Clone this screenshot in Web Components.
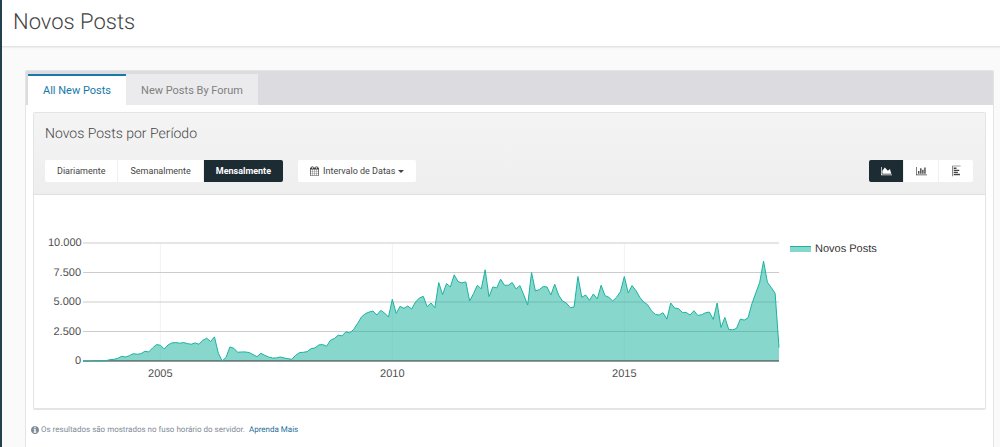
<!DOCTYPE html>
<html lang="pt">
<head>
<meta charset="utf-8">
<meta name="viewport" content="width=device-width, initial-scale=1">
<title>Novos Posts</title>
<style>
  html {
    height: 100%;
    background-color: #fafafa;
  }

  body {
    display: flex;
    flex-direction: column;
    min-height: 100%;
    margin: 0;
    box-sizing: border-box;
    border-left: 2px solid #23404f;
    font-family: Roboto, "Liberation Sans", sans-serif;
    font-size: 9px;
    color: #444;
    text-rendering: geometricPrecision;
  }
</style>
</head>
<body>
<page-header>Novos Posts</page-header>
<stats-tabs>
  <stats-panel>
    <span slot="title">Novos Posts por Período</span>
    <button-group slot="tools" labels="Diariamente,Semanalmente,Mensalmente" selected="2"></button-group>
    <date-range slot="tools">Intervalo de Datas</date-range>
    <chart-types slot="types"></chart-types>
    <area-chart series="Novos Posts"></area-chart>
  </stats-panel>
  <info-note slot="footer">Os resultados são mostrados no fuso horário do servidor. <a slot="link" href="#">Aprenda Mais</a></info-note>
</stats-tabs>

<script>
const define = (name, html, setup) => {
  const template = document.createElement('template');
  template.innerHTML = html;

  customElements.define(name, class extends HTMLElement {
    constructor() {
      super();
      this.attachShadow({ mode: 'open' }).appendChild(template.content.cloneNode(true));
    }

    connectedCallback() {
      if (setup && !this.ready) {
        this.ready = true;
        setup(this, this.shadowRoot);
      }
    }
  });
};

/* Shared by the button bars */
const buttonStyle = `
  button {
    display: flex;
    align-items: center;
    justify-content: center;
    height: 22px;
    margin: 0;
    padding: 0 12px;
    border: 0;
    font: inherit;
    color: #444;
    background-color: #fff;
    cursor: pointer;
  }

  button.selected {
    color: #fff;
    font-weight: 700;
    background-color: #1d2b33;
  }

  svg {
    display: block;
    fill: currentColor;
  }
`;

define('page-header', `
<style>
  :host {
    display: block;
    padding: 9px 11px 10px;
    background-color: #fff;
    border-bottom: 1px solid #e4e4e4;
    box-shadow: 0 1px 1px #eee;
  }

  h1 {
    margin: 0;
    font-size: 22px;
    font-weight: 300;
    line-height: 27px;
    color: #444;
  }
</style>
<h1><slot></slot></h1>
`);

define('stats-tabs', `
<style>
  :host {
    display: flex;
    flex: 1;
    flex-direction: column;
    margin: 23px 6px 0 23px;
    border: 1px solid #e4e4e6;
    border-bottom: 0;
    border-radius: 2px 2px 0 0;
    background-color: #fff;
  }

  .tabs {
    display: flex;
    padding: 3px 2px 0;
    background-color: #dcdce0;
  }

  button {
    height: 31px;
    margin: 0;
    padding: 0 15px;
    border: 0;
    border-top: 2px solid #ebebed;
    font: inherit;
    font-size: 11px;
    color: #808080;
    background-color: #ebebed;
    cursor: pointer;
  }

  button[aria-selected="true"] {
    border-top-color: #1878a8;
    color: #1878a8;
    background-color: #fff;
  }

  .content {
    padding: 7px 7px 14px;
  }

  .footer {
    padding: 0 5px 12px;
  }
</style>
<div class="tabs" role="tablist">
  <button role="tab" aria-selected="true">All New Posts</button>
  <button role="tab" aria-selected="false">New Posts By Forum</button>
</div>
<div class="content"><slot></slot></div>
<div class="footer"><slot name="footer"></slot></div>
`);

define('stats-panel', `
<style>
  :host {
    display: block;
    border: 1px solid #e4e4e4;
    border-bottom-width: 2px;
    border-radius: 2px;
  }

  header {
    padding: 11px 12px 12px 11px;
    border-bottom: 1px solid #e0e0e0;
    background: linear-gradient(#f4f4f4, #eee);
  }

  h2 {
    margin: 0 0 16px;
    font-size: 14px;
    font-weight: 300;
    line-height: 20px;
  }

  .tools {
    display: flex;
    gap: 15px;
  }

  .types {
    margin-left: auto;
  }
</style>
<header>
  <h2><slot name="title"></slot></h2>
  <div class="tools">
    <slot name="tools"></slot>
    <div class="types"><slot name="types"></slot></div>
  </div>
</header>
<slot></slot>
`);

define('button-group', `
<style>
  ${buttonStyle}

  :host {
    display: flex;
    gap: 1px;
  }

  button:first-of-type {
    border-radius: 2px 0 0 2px;
  }

  button:last-of-type {
    border-radius: 0 2px 2px 0;
  }
</style>
`, (host, root) => {
  host.getAttribute('labels').split(',').forEach((label, i) => {
    const button = document.createElement('button');
    button.textContent = label;
    button.classList.toggle('selected', i === Number(host.getAttribute('selected')));
    root.appendChild(button);
  });
});

define('date-range', `
<style>
  ${buttonStyle}

  :host {
    display: block;
  }

  button {
    gap: 4px;
    border-radius: 2px;
  }

  .caret {
    margin-left: -1px;
    border: 3px solid transparent;
    border-top-color: currentColor;
    border-bottom: 0;
  }
</style>
<button aria-haspopup="true">
  <svg width="9" height="10" viewBox="0 0 1664 1792"><path d="M128 1664h288v-288h-288v288zm352 0h320v-288h-320v288zm-352-352h288v-320h-288v320zm352 0h320v-320h-320v320zm-352-384h288v-288h-288v288zm736 736h320v-288h-320v288zm-384-736h320v-288h-320v288zm768 736h288v-288h-288v288zm-384-352h320v-320h-320v320zm-352-864v-288q0-13-9-22t-23-10h-64q-13 0-22 10t-10 22v288q0 13 10 23t22 9h64q13 0 23-9t9-23zm736 864h288v-320h-288v320zm-384-384h320v-288h-320v288zm384 0h288v-288h-288v288zm32-480v-288q0-13-9-22t-23-10h-64q-13 0-22 10t-10 22v288q0 13 10 23t22 9h64q13 0 23-9t9-23zm384-64v1280q0 52-38 90t-90 38h-1408q-52 0-90-38t-38-90v-1280q0-52 38-90t90-38h128v-96q0-66 47-113t113-47h64q66 0 113 47t47 113v96h384v-96q0-66 47-113t113-47h64q66 0 113 47t47 113v96h128q52 0 90 38t38 90z"/></svg>
  <slot></slot>
  <span class="caret"></span>
</button>
`);

define('chart-types', `
<style>
  ${buttonStyle}

  :host {
    display: flex;
    gap: 1px;
  }

  button {
    width: 34px;
    padding: 0;
  }

  button.selected {
    border-radius: 2px 0 0 2px;
  }

  button:last-child {
    border-radius: 0 2px 2px 0;
  }

  .rotated {
    transform: rotate(90deg);
  }
</style>
<button class="selected" aria-label="Area"><svg width="11" height="10" viewBox="0 0 2048 1792"><path d="M2048 1536v128h-2048v-1536h128v1408h1920zm-384-1024l256 896h-1664v-576l448-576 576 576z"/></svg></button>
<button aria-label="Column"><svg width="11" height="10" viewBox="0 0 2048 1792"><path d="M640 896v512h-256v-512h256zm384-512v1024h-256v-1024h256zm1024 1152v128h-2048v-1536h128v1408h1920zm-640-896v768h-256v-768h256zm384-384v1152h-256v-1152h256z"/></svg></button>
<button aria-label="Bar"><svg class="rotated" width="11" height="10" viewBox="0 0 2048 1792"><path d="M640 896v512h-256v-512h256zm384-512v1024h-256v-1024h256zm1024 1152v128h-2048v-1536h128v1408h1920zm-640-896v768h-256v-768h256zm384-384v1152h-256v-1152h256z"/></svg></button>
`);

// One level per month, May 2003 to May 2018. 352 levels = 10.000 posts.
const AXIS_LEVELS = 352;
const LEVELS = [
  0, 0, 0, 1, 1, 1, 1, 4,
  5, 8, 14, 12, 16, 22, 20, 22, 29, 27, 39, 49,
  47, 36, 48, 54, 55, 53, 55, 52, 50, 54, 50, 62,
  68, 58, 72, 23, 0, 11, 42, 38, 26, 27, 27, 25,
  19, 13, 23, 17, 12, 9, 9, 12, 9, 7, 5, 17,
  25, 26, 28, 37, 39, 48, 49, 44, 62, 67, 77, 75,
  87, 84, 94, 112, 131, 141, 146, 149, 137, 151, 143, 131,
  184, 142, 163, 157, 164, 155, 176, 188, 193, 162, 173, 159,
  234, 198, 231, 221, 257, 237, 233, 236, 179, 201, 226, 215,
  272, 192, 221, 218, 244, 226, 226, 234, 215, 225, 197, 167,
  264, 209, 213, 222, 221, 197, 229, 197, 179, 173, 159, 161,
  252, 190, 197, 181, 200, 185, 226, 195, 190, 179, 190, 207,
  252, 203, 225, 210, 190, 176, 168, 150, 139, 137, 144, 125,
  173, 158, 156, 145, 145, 137, 150, 136, 138, 144, 146, 124,
  173, 100, 130, 94, 93, 97, 125, 122, 129, 171, 203, 234,
  298, 235, 219, 202, 40
];

define('area-chart', `
<style>
  :host {
    display: grid;
    grid-template-columns: 33px 1fr 206px;
    padding: 40px 0 26px 14px;
    font-family: "Liberation Sans", Arial, sans-serif;
    font-size: 11px;
    line-height: 16px;
    color: #505050;
  }

  .values {
    display: flex;
    flex-direction: column;
    justify-content: space-between;
    height: 134px;
    text-align: right;
  }

  .plot {
    display: block;
    width: calc(100% - 2px);
    height: 118px;
    margin: 8px 0 8px 2px;
    overflow: visible;
  }

  .plot path {
    fill: none;
    vector-effect: non-scaling-stroke;
  }

  .plot .rows { stroke: #ccc; }
  .plot .years { stroke: #f2f2f2; }
  .plot .base { stroke: #333; }
  .plot .line { stroke: #1ab3a0; }
  .plot .area { fill: #10b09c; fill-opacity: .5; }

  .legend {
    display: flex;
    align-items: center;
    align-self: start;
    gap: 4px;
    margin: 6px 0 0 11px;
    color: #333;
  }

  .swatch {
    width: 21px;
    height: 5px;
    border-top: 1px solid #1ab3a0;
    background-color: #87d7cd;
  }

  .dates {
    grid-column: 2;
    display: grid;
    grid-template-columns: repeat(9, 1fr);
    margin: -3px 0 0 2px;
    text-align: center;
  }

  .dates span:nth-child(1) { grid-column: 1 / span 2; }
  .dates span:nth-child(2) { grid-column: 4 / span 2; }
  .dates span:nth-child(3) { grid-column: 7 / span 2; }
</style>
<div class="values"><span>10.000</span><span>7.500</span><span>5.000</span><span>2.500</span><span>0</span></div>
<svg class="plot" viewBox="0 0 180 352" preserveAspectRatio="none">
  <path class="years" d="M20 0V352M80 0V352M140 0V352"/>
  <path class="rows" d="M0 0H180M0 88H180M0 176H180M0 264H180"/>
  <path class="area"/>
  <path class="base" d="M0 352H180"/>
  <path class="line"/>
</svg>
<div class="legend"><span class="swatch"></span><span class="name"></span></div>
<div class="dates"><span>2005</span><span>2010</span><span>2015</span></div>
`, (host, root) => {
  const points = LEVELS.map((level, month) => `${month} ${AXIS_LEVELS - level}`).join('L');
  root.querySelector('.line').setAttribute('d', `M${points}`);
  root.querySelector('.area').setAttribute('d', `M0 ${AXIS_LEVELS}L${points}V${AXIS_LEVELS}Z`);
  root.querySelector('.name').textContent = host.getAttribute('series');
});

define('info-note', `
<style>
  :host {
    display: flex;
    align-items: center;
    gap: 2px;
    font-size: 8px;
    line-height: 12px;
    color: #7f8c97;
  }

  .text {
    display: flex;
    gap: 4px;
  }

  svg {
    fill: #7d8b96;
  }

  ::slotted(a) {
    color: #1f6f9c;
    text-decoration: none;
  }
</style>
<svg width="8" height="8" viewBox="0 0 1536 1536"><path d="M1024 1248v-160q0-14-9-23t-23-9h-96v-512q0-14-9-23t-23-9h-320q-14 0-23 9t-9 23v160q0 14 9 23t23 9h96v320h-96q-14 0-23 9t-9 23v160q0 14 9 23t23 9h448q14 0 23-9t9-23zm-128-896v-160q0-14-9-23t-23-9h-192q-14 0-23 9t-9 23v160q0 14 9 23t23 9h192q14 0 23-9t9-23zm640 416q0 209-103 385.500t-279.500 279.500-385.500 103-385.500-103-279.500-279.500-103-385.500 103-385.500 279.500-279.500 385.500-103 385.500 103 279.500 279.500 103 385.500z"/></svg>
<div class="text"><span><slot></slot></span><slot name="link"></slot></div>
`);
</script>
</body>
</html>
